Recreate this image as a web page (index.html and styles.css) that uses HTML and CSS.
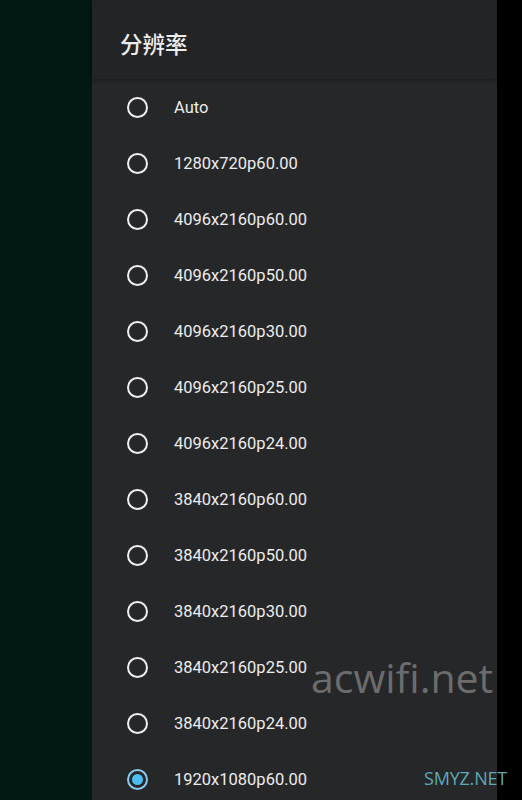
FILE: index.html
```html
<!DOCTYPE html>
<html lang="zh-CN">
<head>
    <meta charset="UTF-8">
    <meta name="viewport" content="width=device-width, initial-scale=1.0">
    <title>分辨率</title>
    <link rel="stylesheet" href="styles.css">
</head>
<body>
    <div class="screen">
        <div class="side"></div>
        <div class="panel">
            <div class="header">分辨率</div>
            <ul class="options">
                <li class="option"><span class="radio"></span><span class="label">Auto</span></li>
                <li class="option"><span class="radio"></span><span class="label">1280x720p60.00</span></li>
                <li class="option"><span class="radio"></span><span class="label">4096x2160p60.00</span></li>
                <li class="option"><span class="radio"></span><span class="label">4096x2160p50.00</span></li>
                <li class="option"><span class="radio"></span><span class="label">4096x2160p30.00</span></li>
                <li class="option"><span class="radio"></span><span class="label">4096x2160p25.00</span></li>
                <li class="option"><span class="radio"></span><span class="label">4096x2160p24.00</span></li>
                <li class="option"><span class="radio"></span><span class="label">3840x2160p60.00</span></li>
                <li class="option"><span class="radio"></span><span class="label">3840x2160p50.00</span></li>
                <li class="option"><span class="radio"></span><span class="label">3840x2160p30.00</span></li>
                <li class="option"><span class="radio"></span><span class="label">3840x2160p25.00</span></li>
                <li class="option"><span class="radio"></span><span class="label">3840x2160p24.00</span></li>
                <li class="option selected"><span class="radio"></span><span class="label">1920x1080p60.00</span></li>
            </ul>
        </div>
        <div class="edge"></div>
        <div class="mark">acwifi.net</div>
        <div class="mark-small">SMYZ.NET</div>
    </div>
</body>
</html>
```

FILE: styles.css
```css
body {
    margin: 0;
    background-color: #000;
    font-family: Roboto, "Noto Sans", sans-serif;
}
.screen {
    position: relative;
    display: flex;
    width: 522px;
    height: 800px;
    overflow: hidden;
}
.side {
    width: 92px;
    background-color: #021814;
}
.panel {
    width: 405px;
    background-color: #262729;
}
.edge {
    flex: 1;
    background-color: #000;
}
.header {
    height: 79px;
    box-sizing: border-box;
    padding: 29px 0 0 28px;
    background-color: #232426;
    color: #ececec;
    font-family: "Noto Sans CJK SC", sans-serif;
    font-size: 22.5px;
    font-weight: 500;
    line-height: 28px;
    box-shadow: 0 1px 3px rgba(0, 0, 0, 0.35);
    position: relative;
}
.options {
    list-style: none;
    margin: 0;
    padding: 0;
}
.option {
    display: flex;
    align-items: center;
    height: 56px;
    padding-left: 35px;
}
.radio {
    width: 21px;
    height: 21px;
    box-sizing: border-box;
    border: 2.5px solid #f0f0f0;
    border-radius: 50%;
    margin-right: 26px;
    display: flex;
    align-items: center;
    justify-content: center;
}
.label {
    color: #ececec;
    font-size: 16.5px;
}
.selected .radio {
    border-color: #8cc8ee;
}
.selected .radio::after {
    content: "";
    width: 11px;
    height: 11px;
    border-radius: 50%;
    background-color: #4dbef5;
}
.mark {
    position: absolute;
    left: 311px;
    top: 652px;
    color: #6c6c6c;
    font-family: "Open Sans", sans-serif;
    font-size: 41px;
    line-height: 50px;
}
.mark-small {
    position: absolute;
    left: 424px;
    top: 766px;
    color: #5ea9b3;
    font-family: "Open Sans", sans-serif;
    font-size: 18px;
    line-height: 24px;
    letter-spacing: -0.2px;
}
```
